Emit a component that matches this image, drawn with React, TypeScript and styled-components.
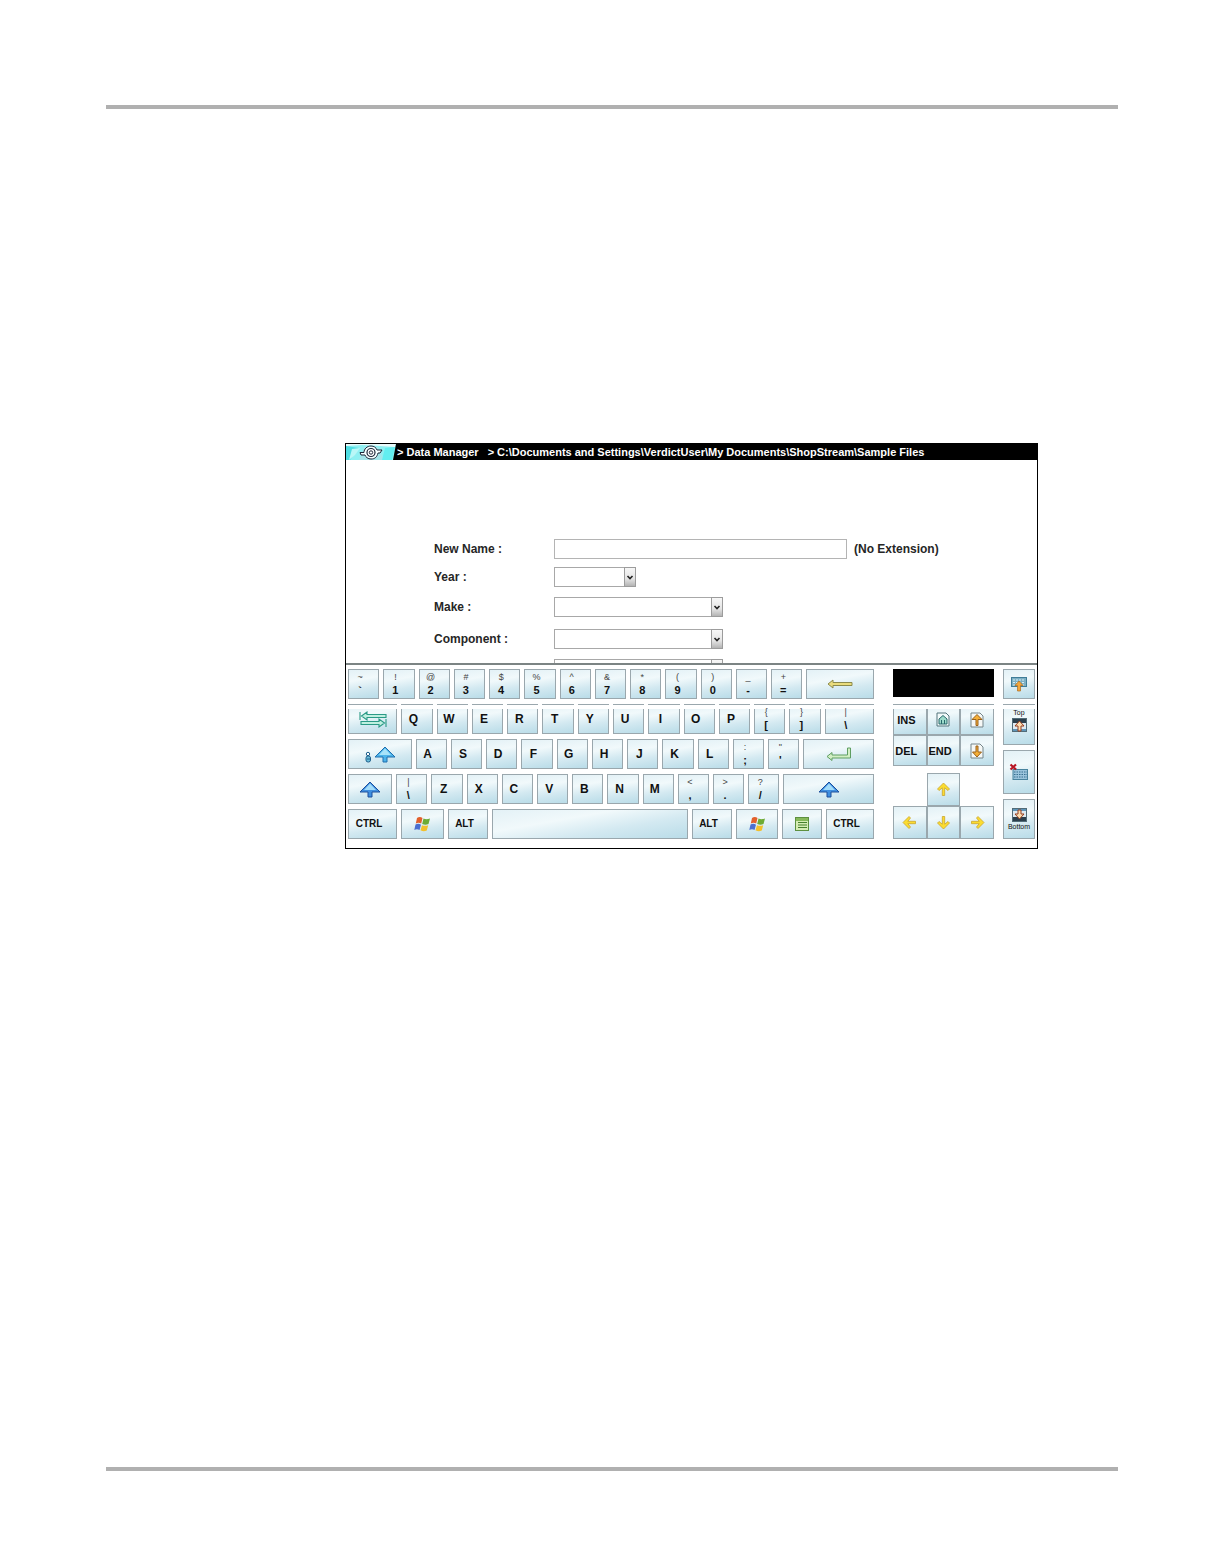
import React from "react";
import styled, { createGlobalStyle, css } from "styled-components";

const GlobalStyle = createGlobalStyle`
  *, *::before { box-sizing: border-box; }
  body {
    margin: 0;
    background: #fff;
    color: #111;
    font-family: "Liberation Sans", Arial, sans-serif;
  }
`;

const Page = styled.div`
  display: flex;
  flex-direction: column;
  min-height: 100vh;
  padding: 105px 88px 95px 106px;
`;

const PageRule = styled.hr`
  width: 100%;
  height: 4px;
  margin: 0;
  border: 0;
  background: #b0b0b0;
`;

const Content = styled.main`
  flex: 1;
  padding: 334px 80px 40px 239px;
`;

const Screen = styled.section`
  border: 1px solid #000;
  background: #fff;
`;

const TitleBar = styled.header`
  display: flex;
  align-items: center;
  height: 16px;
  overflow: hidden;
  background: #000;
  color: #fff;
  font-size: 11px;
  font-weight: 700;
  line-height: 16px;
  white-space: nowrap;
`;

const Crumb = styled.span`
  margin-right: 9px;
`;

const Logo = styled.svg`
  flex: none;
  width: 50px;
  height: 16px;
  margin-right: 1px;
`;

const Form = styled.form`
  height: 203px;
  padding: 79px 20px 0 88px;
  overflow: hidden;
`;

const Field = styled.div<{ $gap: number }>`
  display: grid;
  grid-template-columns: 120px auto 1fr;
  align-items: center;
  height: 20px;
  margin-bottom: ${(p) => p.$gap}px;
  font-size: 12px;
  font-weight: 700;
  color: #262626;
`;

const TextBox = styled.input`
  width: 293px;
  height: 20px;
  padding: 0 4px;
  border: 1px solid #b4b4b4;
  background: #fff;
  font: inherit;
`;

const Hint = styled.span`
  margin-left: 7px;
`;

const SelectWrap = styled.div<{ $width: number }>`
  position: relative;
  grid-column: 2;
  width: ${(p) => p.$width}px;
  height: 20px;
`;

const Select = styled.select`
  width: 100%;
  height: 20px;
  padding: 0 14px 0 4px;
  border: 1px solid #a8a8a8;
  border-radius: 0;
  background: #fff;
  appearance: none;
  font: inherit;
`;

const SelectArrow = styled.span`
  position: absolute;
  top: 0;
  right: 0;
  display: flex;
  align-items: center;
  justify-content: center;
  width: 12px;
  height: 20px;
  border: 1px solid #9c9c9c;
  background: linear-gradient(#f7f7f7, #e4e4e4 60%, #b4b4b4);
  pointer-events: none;
`;

const Keyboard = styled.div`
  display: flex;
  padding: 4px 2px 9px;
  border-top: 2px solid #7c8484;
`;

const MainKeys = styled.div`
  display: flex;
  flex: 526;
  flex-direction: column;
  gap: 5px;
  min-width: 0;
`;

const KeyRow = styled.div<{ $columns: string }>`
  display: grid;
  grid-template-columns: ${(p) => p.$columns};
  gap: 4px;
  height: 30px;
`;

const cutTop = css`
  position: relative;
  &::before {
    content: "";
    position: absolute;
    top: 0;
    right: -1px;
    left: -1px;
    height: 4px;
    background: #fff;
  }
`;

const KeyBase = styled.button`
  display: flex;
  flex-direction: column;
  align-items: center;
  justify-content: center;
  min-width: 0;
  margin: 0;
  padding: 0;
  border: 1px solid #9aa7ad;
  background: linear-gradient(170deg, #e3f1f6 0%, #f1f9fb 35%, #d3e9f1 65%, #b9dce8 100%);
  color: #111;
  font-family: inherit;
  font-weight: 700;
`;

const Key = styled(KeyBase)<{ $cut?: boolean; $text?: boolean; $word?: boolean }>`
  padding-right: ${(p) => (p.$text ? 7 : 0)}px;
  font-size: ${(p) => (p.$word ? 10 : 12)}px;
  line-height: 12px;
  ${(p) => p.$cut && cutTop}
`;

const UpperGlyph = styled.span`
  position: relative;
  height: 12px;
  font-size: 9px;
  font-weight: 400;
  line-height: 11px;
  color: #444;
`;

const LowerGlyph = styled.span`
  height: 12px;
  font-size: 11px;
  line-height: 12px;
`;

const NavPad = styled.div`
  flex: 101;
  min-width: 0;
  margin-left: 19px;
`;

const Display = styled.div`
  height: 28px;
  margin-bottom: 7px;
  background: #000;
`;

const NavGrid = styled.div<{ $row: number }>`
  display: grid;
  grid-template-columns: repeat(3, 1fr);
  grid-auto-rows: ${(p) => p.$row}px;
  margin-bottom: 7px;

  &:last-child {
    margin-bottom: 0;
  }
`;

const NavKey = styled(KeyBase)<{ $cut?: boolean; $word?: boolean; $column?: number }>`
  grid-column: ${(p) => p.$column ?? "auto"};
  padding-right: ${(p) => (p.$word ? 7 : 0)}px;
  font-size: 11px;
  ${(p) => p.$cut && cutTop}
`;

const SideKeys = styled.div`
  display: flex;
  flex: 32;
  flex-direction: column;
  gap: 5px;
  min-width: 0;
  margin-left: 9px;
`;

const SideKey = styled(KeyBase)<{ $grow: number; $cut?: boolean }>`
  flex: ${(p) => p.$grow} 1 0;
  gap: 1px;
  justify-content: ${(p) => (p.$cut ? "flex-start" : "center")};
  padding-top: ${(p) => (p.$cut ? 4 : 0)}px;
  font-size: 7px;
  line-height: 8px;
  ${(p) => p.$cut && cutTop}
`;

const SideLabel = styled.span`
  font-weight: 400;
`;

const Icon = styled.svg`
  flex: none;
  display: block;
`;

/* ---------- drawings ---------- */

const BrandMark = () => (
  <Logo viewBox="0 0 50 16" aria-hidden="true">
    <rect width="50" height="16" fill="#8ff0f2" />
    <path d="M0 0H50L49 3L34 2L16 1L0 2Z" fill="#e9fbfb" />
    <path d="M0 2L13 4L4 16H0Z" fill="#4fdde2" />
    <path d="M6 5L14 4L9 11L3 16Z" fill="#b9f7f7" />
    <path d="M13 16L18 3H32L38 16Z" fill="#a4e6ea" />
    <path d="M36 16L39 4L49 3L46 16Z" fill="#62eef0" />
    <path d="M47 16L50 0V16Z" fill="#000" />
    <path d="M14 8.500H18C18 5 21 2 25 2C28 2 30 3.500 31 6H36L34 9H32C31 13 29 15 25 15C22 15 19.500 13 19 11H15Z" fill="#f4ffff" stroke="#1d2638" />
    <circle cx="25" cy="8.500" r="4" fill="#fff" stroke="#1d2638" strokeWidth="1.2" />
    <circle cx="25" cy="8.500" r="1.700" fill="#fff" stroke="#1d2638" />
  </Logo>
);

const Chevron = () => (
  <Icon width="8" height="5" viewBox="0 0 8 5" aria-hidden="true">
    <path d="M1.500 1L4 3.500L6.500 1" fill="none" stroke="#222" strokeWidth="1.600" />
  </Icon>
);

const BackspaceIcon = () => (
  <Icon width="26" height="10" viewBox="0 0 26 10" aria-hidden="true">
    <path d="M1 5L6 1V3.500H25V6.500H6V9Z" fill="#e9dc7c" stroke="#8c8a4c" />
  </Icon>
);

const TabIcon = () => (
  <Icon width="28" height="17" viewBox="0 0 28 17" aria-hidden="true">
    <g fill="#bff0e0" stroke="#2b9a86" strokeWidth="1.100">
      <path d="M1 1V9M2.500 5L8 1V3.500H27V6.500H8V9Z" />
      <path d="M27 8V16M25.500 12L20 8V10.500H2V13.500H20V16Z" />
    </g>
  </Icon>
);

const EnterIcon = () => (
  <Icon width="26" height="15" viewBox="0 0 26 15" aria-hidden="true">
    <path d="M1 9.500L6 5.500V8H21.500V1H24.500V11H6V13.500Z" fill="#d2efc4" stroke="#5f9e62" />
  </Icon>
);

const ShiftIcon = () => (
  <Icon width="22" height="17" viewBox="0 0 22 17" aria-hidden="true">
    <path d="M11 1L21 11H13V16H9V11H1Z" fill="#3f8fe0" stroke="#1c4f9c" />
    <path d="M11 2.500L17 9H5Z" fill="#a3dcfa" />
  </Icon>
);

const CapsIcon = () => (
  <Icon width="32" height="17" viewBox="0 0 32 17" aria-hidden="true">
    <path d="M21 1L31 11H23V16H19V11H11Z" fill="#4cb4ea" stroke="#1f6fae" />
    <path d="M21 2.500L27 9H15Z" fill="#a8e4fa" />
    <circle cx="4" cy="8" r="1.700" fill="#fff" stroke="#1d5f8c" />
    <rect x="2" y="10" width="4.500" height="6" rx="2" fill="#6cc0dc" stroke="#1d5f8c" />
    <path d="M3 13H6" stroke="#1d5f8c" />
  </Icon>
);

const WindowsIcon = () => (
  <Icon width="17" height="16" viewBox="0 0 17 16" aria-hidden="true">
    <path d="M3 2C5 0.500 7 1 8.500 2L7.200 7.500C5.500 6.500 3.500 6.500 1.800 7.500Z" fill="#e2602c" />
    <path d="M9.500 2.500C11.500 3.500 13.500 3.500 16 2.500L14.500 8C12.500 9 10.500 9 8.200 8Z" fill="#6dab35" />
    <path d="M1.500 8.500C3.500 7.500 5.500 7.700 7 8.700L5.500 14C4 13 2 13 0.300 14Z" fill="#4b6fd0" />
    <path d="M8 9.200C10 10 12 10 14.200 9.200L12.800 14.500C10.500 15.500 8.500 15.300 6.500 14.300Z" fill="#f2c02c" />
  </Icon>
);

const MenuIcon = () => (
  <Icon width="14" height="14" viewBox="0 0 14 14" aria-hidden="true">
    <rect x="0.500" y="0.500" width="13" height="13" fill="#d5ecb4" stroke="#5d9040" />
    <rect x="1" y="1" width="12" height="3" fill="#86b95a" />
    <path d="M3 5.500H12M3 8H12M3 10.500H12" stroke="#467f2c" />
  </Icon>
);

const HomeIcon = () => (
  <Icon width="14" height="15" viewBox="0 0 14 15" aria-hidden="true">
    <path d="M1 1H10L13 4V14H1Z" fill="#f2fafa" stroke="#54757c" />
    <path d="M3 7L7 3.500L11 7V12H3Z" fill="#9edccb" stroke="#28686c" />
    <path d="M5.500 12V8M8.500 12V8" stroke="#28686c" />
  </Icon>
);

const PageArrowIcon = ({ down }: { down?: boolean }) => (
  <Icon width="14" height="16" viewBox="0 0 14 16" aria-hidden="true">
    <path d="M1 1H10L13 4V15H1Z" fill="#f6f8f6" stroke="#75858a" />
    <path
      d={down ? "M6 3H8V9H11.500L7 14L2.500 9H6Z" : "M6 13.500H8V7.500H12L7 2.500L2 7.500H6Z"}
      fill="#f4ae36"
      stroke="#98611c"
    />
  </Icon>
);

const turns = { up: 0, right: 90, down: 180, left: 270 };

const ArrowIcon = ({ to }: { to: keyof typeof turns }) => (
  <Icon width="15" height="15" viewBox="0 0 15 15" aria-hidden="true">
    <path
      transform={`rotate(${turns[to]} 7.5 7.5)`}
      d="M7.500 1L13.500 7L12 8.500L8.700 5.800V13.500H6.300V5.800L3 8.500L1.500 7Z"
      fill="#fbdc30"
      stroke="#c9a52c"
      strokeWidth="0.800"
    />
  </Icon>
);

const KeyboardUpIcon = () => (
  <Icon width="16" height="16" viewBox="0 0 16 16" aria-hidden="true">
    <rect x="0.500" y="1.500" width="15" height="9" fill="#7db0c4" stroke="#3f7d98" />
    <path d="M2 4H14M2 6.500H14M2 9H14" stroke="#d6eef4" strokeDasharray="2 1" />
    <path d="M8 5L12 9.500H9.500V15H6.500V9.500H4Z" fill="#f3a63a" stroke="#ad6c1c" strokeWidth="0.700" />
  </Icon>
);

const DockIcon = ({ down }: { down?: boolean }) => (
  <Icon width="15" height="14" viewBox="0 0 15 14" aria-hidden="true">
    <rect x="0.500" y="0.500" width="14" height="13" fill="#dfeaf0" stroke="#526c78" />
    <rect x="1" y={down ? 9 : 1} width="13" height="4" fill="#2b3f4c" />
    <path d={down ? "M1 2H14" : "M1 12H14"} stroke="#5d94b8" strokeWidth="2" />
    <path
      d={down ? "M6 2H9V6H12L7.500 11L3 6H6Z" : "M6 13H9V8H12L7.500 3L3 8H6Z"}
      fill="#fbdcb0"
      stroke="#963c1c"
    />
  </Icon>
);

const KeyboardCloseIcon = () => (
  <Icon width="20" height="18" viewBox="0 0 20 18" aria-hidden="true">
    <rect x="4" y="6.500" width="14.500" height="10" fill="#9ac4dc" stroke="#49839e" />
    <path d="M5 9H18M5 11.500H18M5 14H18" stroke="#386f90" strokeDasharray="1.500 1" />
    <path d="M1.500 1.500L7 6.500M7 1.500L1.500 6.500" stroke="#b81524" strokeWidth="2.200" />
  </Icon>
);

/* ---------- keyboard data ---------- */

type KeySpec = {
  span?: number;
  label?: string;
  upper?: string;
  icon?: React.ReactNode;
  name?: string;
};

const pair = (upper: string, label: string, span?: number): KeySpec => ({ upper, label, span });
const letters = (s: string): KeySpec[] => s.split("").map((label) => ({ label }));

const rows: KeySpec[][] = [
  [
    pair("~", "`"), pair("!", "1"), pair("@", "2"), pair("#", "3"), pair("$", "4"),
    pair("%", "5"), pair("^", "6"), pair("&", "7"), pair("*", "8"), pair("(", "9"),
    pair(")", "0"), pair("_", "-"), pair("+", "="),
    { span: 67, icon: <BackspaceIcon />, name: "Backspace" },
  ],
  [
    { span: 49, icon: <TabIcon />, name: "Tab" },
    ...letters("QWERTYUIOP"),
    pair("{", "["), pair("}", "]"), pair("|", "\\", 49),
  ],
  [
    { span: 63, icon: <CapsIcon />, name: "Caps Lock" },
    ...letters("ASDFGHJKL"),
    pair(":", ";"), pair("\"", "'"),
    { span: 70, icon: <EnterIcon />, name: "Enter" },
  ],
  [
    { span: 44, icon: <ShiftIcon />, name: "Left Shift" },
    pair("|", "\\"),
    ...letters("ZXCVBNM"),
    pair("<", ","), pair(">", "."), pair("?", "/"),
    { span: 90, icon: <ShiftIcon />, name: "Right Shift" },
  ],
  [
    { span: 49, label: "CTRL" },
    { span: 43, icon: <WindowsIcon />, name: "Left Windows" },
    { span: 40, label: "ALT" },
    { span: 196, name: "Space" },
    { span: 40, label: "ALT" },
    { span: 42, icon: <WindowsIcon />, name: "Right Windows" },
    { span: 40, icon: <MenuIcon />, name: "Menu" },
    { span: 48, label: "CTRL" },
  ],
];

const columnsOf = (row: KeySpec[]) =>
  row.map((k) => `minmax(0, ${k.span ?? 31}fr)`).join(" ");

const fields = [
  { id: "year", label: "Year :", width: 82, gap: 10 },
  { id: "make", label: "Make :", width: 169, gap: 12 },
  { id: "component", label: "Component :", width: 169, gap: 10 },
  { id: "system", width: 169, gap: 0 },
];

export default function App() {
  return (
    <>
      <GlobalStyle />
      <Page>
        <PageRule />
        <Content>
          <Screen>
            <TitleBar>
              <BrandMark />
              <Crumb>&gt; Data Manager</Crumb>
              <Crumb>
                &gt; C:\Documents and Settings\VerdictUser\My Documents\ShopStream\Sample Files
              </Crumb>
            </TitleBar>

            <Form onSubmit={(e) => e.preventDefault()}>
              <Field $gap={8}>
                <label htmlFor="new-name">New Name :</label>
                <TextBox id="new-name" type="text" />
                <Hint>(No Extension)</Hint>
              </Field>
              {fields.map((f) => (
                <Field key={f.id} $gap={f.gap}>
                  {f.label && <label htmlFor={f.id}>{f.label}</label>}
                  <SelectWrap $width={f.width}>
                    <Select id={f.id} aria-label={f.label ? undefined : f.id}>
                      <option value="" />
                    </Select>
                    <SelectArrow>
                      <Chevron />
                    </SelectArrow>
                  </SelectWrap>
                </Field>
              ))}
            </Form>

            <Keyboard>
              <MainKeys>
                {rows.map((row, r) => (
                  <KeyRow key={r} $columns={columnsOf(row)}>
                    {row.map((k, i) => (
                      <Key
                        key={i}
                        type="button"
                        aria-label={k.name}
                        $cut={r === 1}
                        $text={!!k.label}
                        $word={(k.label ?? "").length > 1}
                      >
                        {k.upper ? (
                          <>
                            <UpperGlyph>{k.upper}</UpperGlyph>
                            <LowerGlyph>{k.label}</LowerGlyph>
                          </>
                        ) : (
                          k.icon ?? k.label
                        )}
                      </Key>
                    ))}
                  </KeyRow>
                ))}
              </MainKeys>

              <NavPad>
                <Display />
                <NavGrid $row={31}>
                  <NavKey type="button" $cut $word>INS</NavKey>
                  <NavKey type="button" $cut aria-label="Home"><HomeIcon /></NavKey>
                  <NavKey type="button" $cut aria-label="Page Up"><PageArrowIcon /></NavKey>
                  <NavKey type="button" $word>DEL</NavKey>
                  <NavKey type="button" $word>END</NavKey>
                  <NavKey type="button" aria-label="Page Down"><PageArrowIcon down /></NavKey>
                </NavGrid>
                <NavGrid $row={33}>
                  <NavKey type="button" $column={2} aria-label="Up"><ArrowIcon to="up" /></NavKey>
                  <NavKey type="button" $column={1} aria-label="Left"><ArrowIcon to="left" /></NavKey>
                  <NavKey type="button" aria-label="Down"><ArrowIcon to="down" /></NavKey>
                  <NavKey type="button" aria-label="Right"><ArrowIcon to="right" /></NavKey>
                </NavGrid>
              </NavPad>

              <SideKeys>
                <SideKey type="button" $grow={30} aria-label="Raise keyboard">
                  <KeyboardUpIcon />
                </SideKey>
                <SideKey type="button" $grow={37} $cut>
                  <SideLabel>Top</SideLabel>
                  <DockIcon />
                </SideKey>
                <SideKey type="button" $grow={44} aria-label="Close keyboard">
                  <KeyboardCloseIcon />
                </SideKey>
                <SideKey type="button" $grow={40}>
                  <DockIcon down />
                  <SideLabel>Bottom</SideLabel>
                </SideKey>
              </SideKeys>
            </Keyboard>
          </Screen>
        </Content>
        <PageRule />
      </Page>
    </>
  );
}
